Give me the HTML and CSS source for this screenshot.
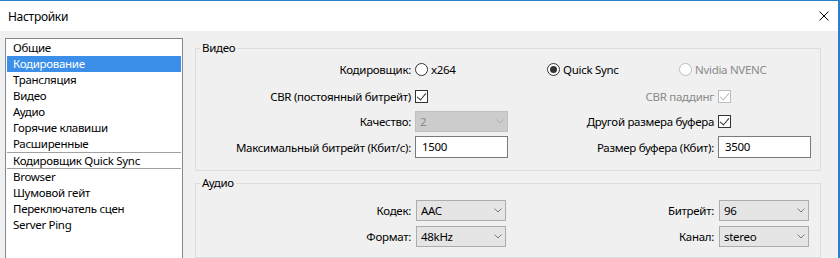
FILE: index.html
```html
<!DOCTYPE html>
<html lang="ru">
<head>
  <meta charset="UTF-8" />
  <title>Настройки</title>
  <link rel="stylesheet" href="styles.css">
</head>
<body>
  <div class="window">
    <div class="titlebar">
      <span class="title">Настройки</span>
      <svg class="close" width="10" height="10" viewBox="0 0 10 10"><path d="M0.5 0.5 L9.5 9.5 M9.5 0.5 L0.5 9.5" stroke="#000" stroke-width="1" fill="none"/></svg>
    </div>

    <div class="content">
      <ul class="nav">
        <li>Общие</li>
        <li class="active">Кодирование</li>
        <li>Трансляция</li>
        <li>Видео</li>
        <li>Аудио</li>
        <li>Горячие клавиши</li>
        <li>Расширенные</li>
        <li class="sep">Кодировщик Quick Sync</li>
        <li>Browser</li>
        <li>Шумовой гейт</li>
        <li>Переключатель сцен</li>
        <li>Server Ping</li>
      </ul>

      <div class="panel">
        <fieldset class="group video">
          <legend>Видео</legend>
          <div class="form video-form">
            <span class="lbl">Кодировщик:</span>
            <div class="radios">
              <span class="opt"><span class="radio"></span>x264</span>
              <span class="opt"><span class="radio on"></span>Quick Sync</span>
              <span class="opt off"><span class="radio"></span>Nvidia NVENC</span>
            </div>

            <span class="lbl">CBR (постоянный битрейт)</span>
            <span class="ctl"><span class="check on"></span></span>
            <span class="lbl off">CBR паддинг</span>
            <span class="ctl"><span class="check on dis"></span></span>

            <span class="lbl">Качество:</span>
            <span class="combo dis"><span>2</span><svg width="8" height="5" viewBox="0 0 8 5"><path d="M0.5 0.5 L4 4 L7.5 0.5" stroke="#b0b0b0" fill="none"/></svg></span>
            <span class="lbl">Другой размера буфера</span>
            <span class="ctl"><span class="check on"></span></span>

            <span class="lbl">Максимальный битрейт (Кбит/с):</span>
            <span class="input">1500</span>
            <span class="lbl">Размер буфера (Кбит):</span>
            <span class="input">3500</span>
          </div>
        </fieldset>

        <fieldset class="group audio">
          <legend>Аудио</legend>
          <div class="form audio-form">
            <span class="lbl">Кодек:</span>
            <span class="combo"><span>AAC</span><svg width="8" height="5" viewBox="0 0 8 5"><path d="M0.5 0.5 L4 4 L7.5 0.5" stroke="#7a7a7a" fill="none"/></svg></span>
            <span class="lbl">Битрейт:</span>
            <span class="combo"><span>96</span><svg width="8" height="5" viewBox="0 0 8 5"><path d="M0.5 0.5 L4 4 L7.5 0.5" stroke="#7a7a7a" fill="none"/></svg></span>

            <span class="lbl">Формат:</span>
            <span class="combo"><span>48kHz</span><svg width="8" height="5" viewBox="0 0 8 5"><path d="M0.5 0.5 L4 4 L7.5 0.5" stroke="#7a7a7a" fill="none"/></svg></span>
            <span class="lbl">Канал:</span>
            <span class="combo"><span>stereo</span><svg width="8" height="5" viewBox="0 0 8 5"><path d="M0.5 0.5 L4 4 L7.5 0.5" stroke="#7a7a7a" fill="none"/></svg></span>
          </div>
        </fieldset>
      </div>
    </div>
  </div>
</body>
</html>
```

FILE: styles.css
```css
* {
  box-sizing: border-box;
}
html, body {
  margin: 0;
  height: 100%;
  overflow: hidden;
}
body {
  font-family: "Noto Sans", sans-serif;
  font-size: 11.5px;
  letter-spacing: -0.3px;
  color: #000;
  background: #f0f0f0;
}
.window {
  height: 258px;
  border-top: 1px solid #2b7fcf;
  border-right: 2px solid #2b7fcf;
  display: flex;
  flex-direction: column;
}
.titlebar {
  height: 30px;
  flex: none;
  background: #fff;
  display: flex;
  align-items: center;
  justify-content: space-between;
  padding: 0 9px 0 8px;
}
.title {
  font-size: 12px;
}
.content {
  flex: 1;
  display: flex;
  align-items: flex-start;
  gap: 12px;
  padding: 7px 0 0 5px;
}
.nav {
  width: 178px;
  height: 220px;
  flex: none;
  margin: 0;
  padding: 1px;
  list-style: none;
  background: #fff;
  border: 1px solid #828790;
  border-bottom: none;
}
.nav li {
  height: 16px;
  line-height: 16px;
  padding-left: 6px;
  white-space: nowrap;
}
.nav li.active {
  background: #3c8fe8;
  color: #fff;
}
.nav li.sep {
  height: 17px;
  line-height: 15px;
  border-top: 1px solid #a0a0a0;
  border-bottom: 1px solid #a0a0a0;
}
.panel {
  width: 626px;
  margin-top: 2px;
}
.group {
  margin: 0;
  padding: 0 0 12px 0;
  min-width: 0;
  border: 1px solid #dcdcdc;
}
.group legend {
  margin-left: 4px;
  padding: 0 2px;
  line-height: 16px;
}
.audio {
  margin-top: 4px;
  padding-bottom: 10px;
}
.form {
  display: grid;
  grid-template-columns: 215px 93px 202px 93px;
  column-gap: 4px;
  align-items: center;
}
.video-form {
  grid-template-rows: 24px 22px 21px 22px;
  row-gap: 4px;
  padding-top: 1px;
}
.audio-form {
  grid-template-rows: 21px 21px;
  row-gap: 5px;
  padding-top: 9px;
}
.lbl {
  text-align: right;
  white-space: nowrap;
}
.off {
  color: #8a8a8a;
}
.radios {
  grid-column: 2 / span 3;
  display: flex;
}
.opt {
  width: 133px;
  display: flex;
  align-items: center;
  gap: 3px;
}
.radio {
  width: 13px;
  height: 13px;
  border: 1px solid #333;
  border-radius: 50%;
  background: #fff;
  display: flex;
  align-items: center;
  justify-content: center;
}
.radio.on::after {
  content: "";
  width: 7px;
  height: 7px;
  border-radius: 50%;
  background: #333;
}
.opt.off .radio {
  border-color: #bcbcbc;
}
.ctl {
  display: flex;
  align-items: center;
}
.check {
  width: 13px;
  height: 13px;
  border: 1px solid #333;
  background: #fff;
  position: relative;
}
.check.on::after {
  content: "";
  position: absolute;
  left: 3px;
  top: 0px;
  width: 4px;
  height: 8px;
  border-right: 1px solid #333;
  border-bottom: 1px solid #333;
  transform: rotate(40deg);
}
.check.dis {
  border-color: #bcbcbc;
}
.check.dis::after {
  border-color: #bcbcbc;
}
.combo {
  height: 21px;
  display: flex;
  align-items: center;
  justify-content: space-between;
  padding: 0 3px 0 4px;
  background: #e5e5e5;
  border: 1px solid #acacac;
}
.combo.dis {
  background: #cccccc;
  border-color: #bfbfbf;
  color: #8a8a8a;
}
.audio-form .combo {
  width: 90px;
  margin-left: 1px;
}
.input {
  height: 22px;
  line-height: 20px;
  padding-left: 6px;
  background: #fff;
  border: 1px solid #7a7a7a;
}
```
